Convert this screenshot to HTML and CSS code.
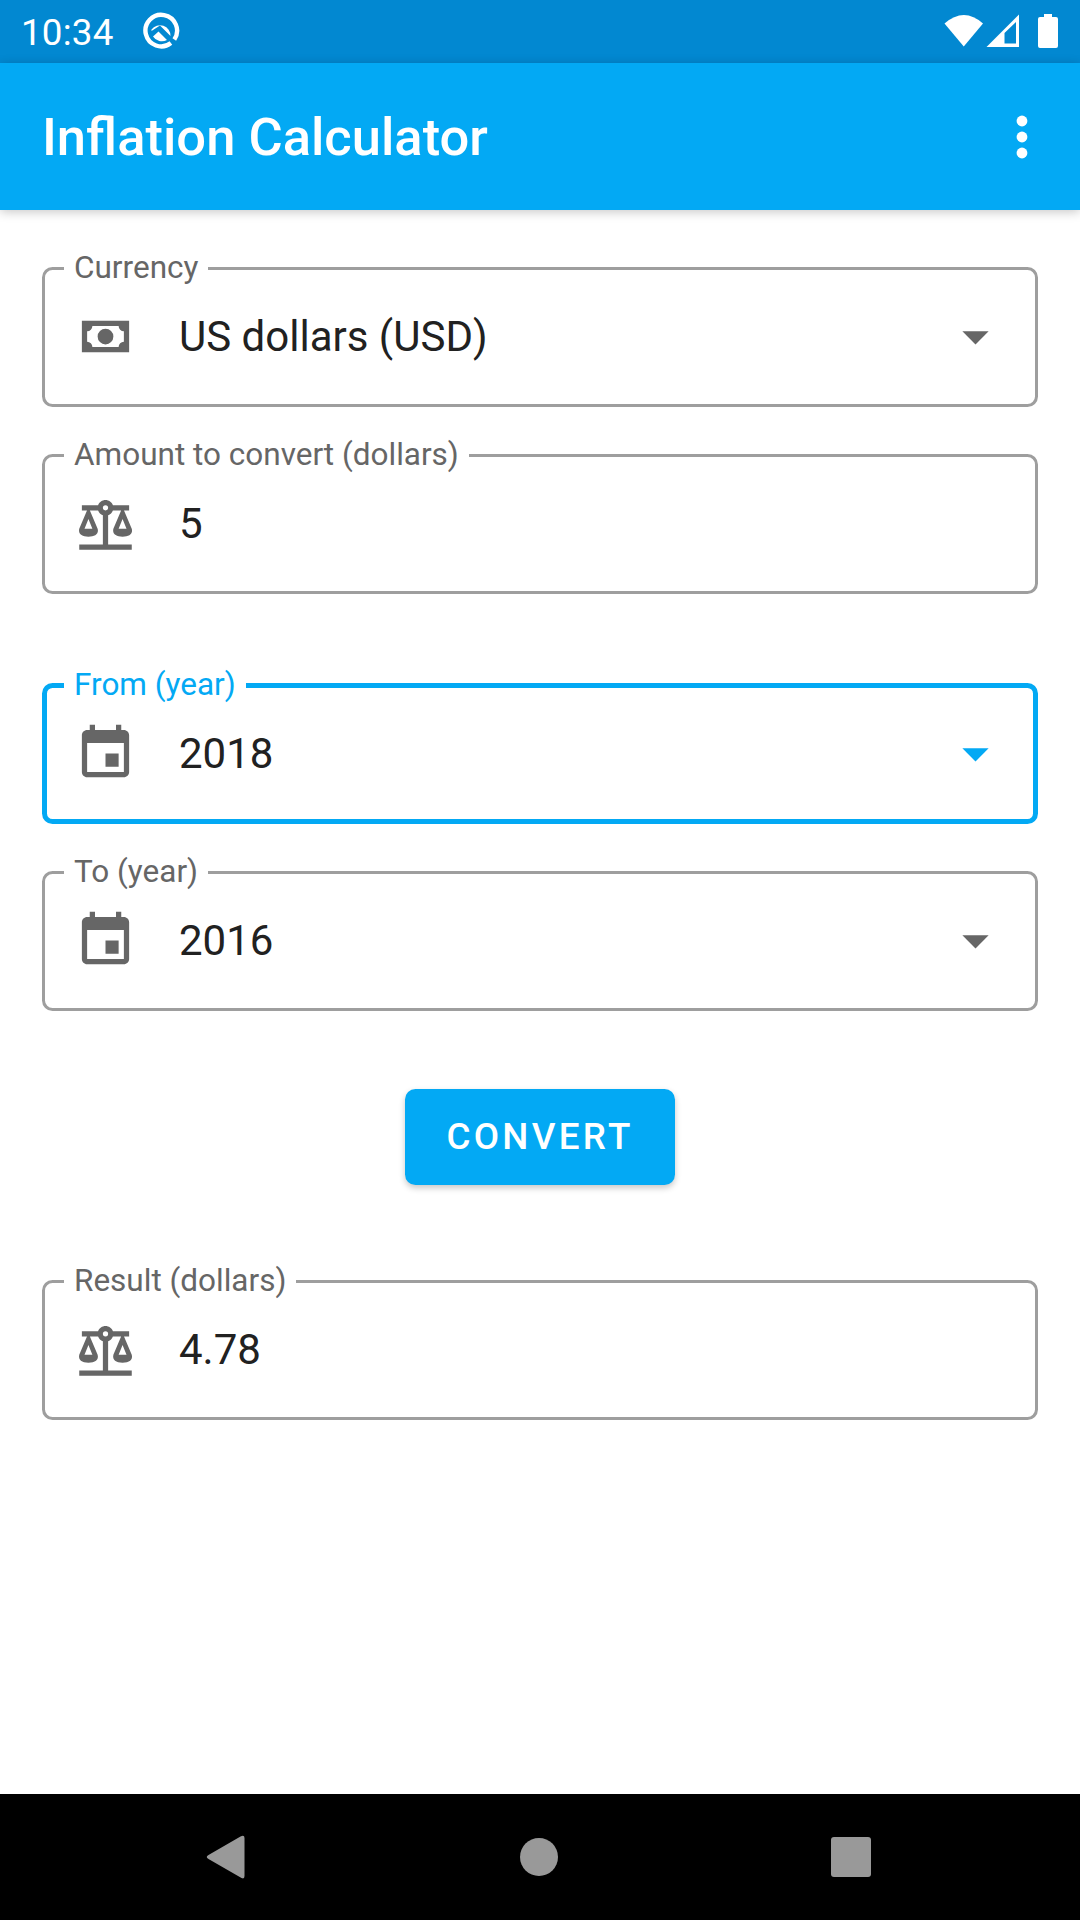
FILE: index.html
```html
<!DOCTYPE html>
<html lang="en">
<head>
<meta charset="utf-8">
<title>Inflation Calculator</title>
<link rel="stylesheet" href="styles.css">
</head>
<body>
<svg class="sprite" aria-hidden="true">
  <symbol id="cash" viewBox="0 0 24 24"><path d="M3,6H21V18H3V6M12,9A3,3 0 0,1 15,12A3,3 0 0,1 12,15A3,3 0 0,1 9,12A3,3 0 0,1 12,9M7,8A2,2 0 0,1 5,10V14A2,2 0 0,1 7,16H17A2,2 0 0,1 19,14V10A2,2 0 0,1 17,8H7Z"/></symbol>
  <symbol id="scale" viewBox="0 0 24 24"><path d="M12,3C10.73,3 9.6,3.8 9.18,5H3V7H4.95L2,14C1.53,16 3,17 5.5,17C8,17 9.56,16 9,14L6.05,7H9.17C9.5,7.85 10.15,8.5 11,8.83V20H2V22H22V20H13V8.82C13.85,8.5 14.5,7.85 14.82,7H17.95L15,14C14.53,16 16,17 18.5,17C21,17 22.56,16 22,14L19.05,7H21V5H14.83C14.4,3.8 13.27,3 12,3M12,5A1,1 0 0,1 13,6A1,1 0 0,1 12,7A1,1 0 0,1 11,6A1,1 0 0,1 12,5M5.5,10.25L7,14H4L5.5,10.25M18.5,10.25L20,14H17L18.5,10.25Z"/></symbol>
  <symbol id="event" viewBox="0 0 24 24"><path d="M17 12h-5v5h5v-5zM16 1v2H8V1H6v2H5c-1.1 0-2 .9-2 2v14c0 1.100.9 2 2 2h14c1.100 0 2-.9 2-2V5c0-1.100-.9-2-2-2h-1V1h-2zm3 18H5V8h14v11z"/></symbol>
  <symbol id="drop" viewBox="0 0 24 24"><path d="M7 10l5 5 5-5z"/></symbol>
</svg>

<header class="status">
  <span class="clock">10:34</span>
  <svg class="beta" viewBox="0 0 40 40">
    <path class="ring" d="M29.900 32.100A15.800 15.800 0 1 1 33.300 28.500"/>
    <path d="M10.500 18.500A10.500 10.500 0 0 1 29.500 25L19 14.500L10.500 20zM12 25.500L17.500 20.500L26 29A10.500 10.500 0 0 1 12 25.500z"/>
  </svg>
  <svg class="signals" viewBox="0 0 116 40">
    <path d="M0.500 12.500Q20 -4.500 39 12.500L19.750 35.500z"/>
    <path fill-rule="evenodd" d="M42.500 36L75 3.500V36zM60.500 22V32.500H72V11z"/>
    <path d="M100 3h8v3h4a2 2 0 0 1 2 2v27a2 2 0 0 1-2 2h-16a2 2 0 0 1-2-2v-27a2 2 0 0 1 2-2h4z"/>
  </svg>
</header>

<div class="appbar">
  <h1 class="title">Inflation Calculator</h1>
  <svg class="more" viewBox="0 0 12 44"><circle cx="6" cy="6" r="5.400"/><circle cx="6" cy="22" r="5.400"/><circle cx="6" cy="38" r="5.400"/></svg>
</div>

<main class="form">
  <fieldset class="field">
    <legend class="label">Currency</legend>
    <div class="row"><svg class="icon"><use href="#cash"/></svg><span class="value">US dollars (USD)</span><svg class="icon"><use href="#drop"/></svg></div>
  </fieldset>
  <fieldset class="field">
    <legend class="label">Amount to convert (dollars)</legend>
    <div class="row"><svg class="icon"><use href="#scale"/></svg><span class="value">5</span></div>
  </fieldset>
  <fieldset class="field focused">
    <legend class="label">From (year)</legend>
    <div class="row"><svg class="icon"><use href="#event"/></svg><span class="value">2018</span><svg class="icon arrow"><use href="#drop"/></svg></div>
  </fieldset>
  <fieldset class="field">
    <legend class="label">To (year)</legend>
    <div class="row"><svg class="icon"><use href="#event"/></svg><span class="value">2016</span><svg class="icon"><use href="#drop"/></svg></div>
  </fieldset>
  <button class="convert" type="button">CONVERT</button>
  <fieldset class="field">
    <legend class="label">Result (dollars)</legend>
    <div class="row"><svg class="icon"><use href="#scale"/></svg><span class="value">4.78</span></div>
  </fieldset>
</main>

<nav class="navbar">
  <svg class="key" viewBox="0 0 44 44"><path d="M4.500 20L36.500 1.500Q40.500 -0.500 40.500 3V41Q40.500 44.500 37.500 43L4.500 24Q1 22 4.500 20z"/></svg>
  <svg class="key" viewBox="0 0 44 44"><circle cx="22" cy="22" r="19"/></svg>
  <svg class="key" viewBox="0 0 44 44"><rect x="2" y="2" width="40" height="40" rx="3"/></svg>
</nav>
</body>
</html>
```
FILE: styles.css
```css
* { box-sizing: border-box; }

body {
  margin: 0;
  width: 1080px;
  height: 1920px;
  display: flex;
  flex-direction: column;
  background: #fff;
  font-family: Roboto, "Liberation Sans", sans-serif;
  overflow: hidden;
}

svg { display: block; flex: none; }
.sprite { width: 0; height: 0; position: absolute; }

.status {
  height: 63px;
  flex: none;
  display: flex;
  align-items: flex-start;
  padding: 11px 20px 0 21px;
  background: #0288d1;
  color: #fff;
  fill: #fff;
}
.clock { width: 120px; font-size: 36.75px; line-height: 44px; letter-spacing: 0.2px; }
.beta { width: 40px; height: 40px; }
.ring { fill: none; stroke: #fff; stroke-width: 4.400; }
.signals { width: 116px; height: 40px; margin-left: auto; }

.appbar {
  height: 147px;
  flex: none;
  display: flex;
  align-items: center;
  justify-content: space-between;
  padding: 0 52px 0 42px;
  background: #03a9f4;
  color: #fff;
  fill: #fff;
  box-shadow: 0 2px 10px rgba(0, 0, 0, 0.22);
}
.title { margin: 0; font-size: 52.5px; font-weight: 500; line-height: 62px; }
.more { width: 12px; height: 44px; }

.form {
  flex: 1;
  display: flex;
  flex-direction: column;
  padding: 46px 42px 0;
}

.field {
  --edge: 3px;
  height: 151px;
  margin: 0 0 36px;
  padding: 0 calc(31.5px - var(--edge)) 0 calc(22px - var(--edge));
  border: var(--edge) solid #9e9e9e;
  border-radius: 10.5px;
  min-width: 0;
  color: #666;
}
.field.focused { --edge: 5px; border-color: #03a9f4; margin-top: 43px; }

.label {
  height: 24px;
  padding: 0 10px;
  font-size: 31.5px;
  line-height: 24px;
}
.focused .label, .focused .arrow { color: #03a9f4; }

.row {
  display: flex;
  align-items: center;
  height: 63px;
  margin-top: 25px;
  padding-left: 10px;
}
.icon { width: 63px; height: 63px; fill: currentColor; }
.value {
  flex: 1;
  padding-left: 42px;
  font-size: 42px;
  line-height: 50px;
  color: #212121;
}

.convert {
  align-self: center;
  width: 270px;
  height: 96px;
  margin: 42px 0 84px;
  padding: 0;
  border: 0;
  border-radius: 10.5px;
  background: #03a9f4;
  color: #fff;
  font: 500 36.75px/44px Roboto, "Liberation Sans", sans-serif;
  letter-spacing: 3.28px;
  box-shadow: 0 3px 6px rgba(0, 0, 0, 0.22);
}

.navbar {
  height: 126px;
  flex: none;
  display: flex;
  align-items: center;
  justify-content: space-between;
  padding: 0 207px 0 204px;
  background: #000;
  fill: #999;
}
.key { width: 44px; height: 44px; }
```
